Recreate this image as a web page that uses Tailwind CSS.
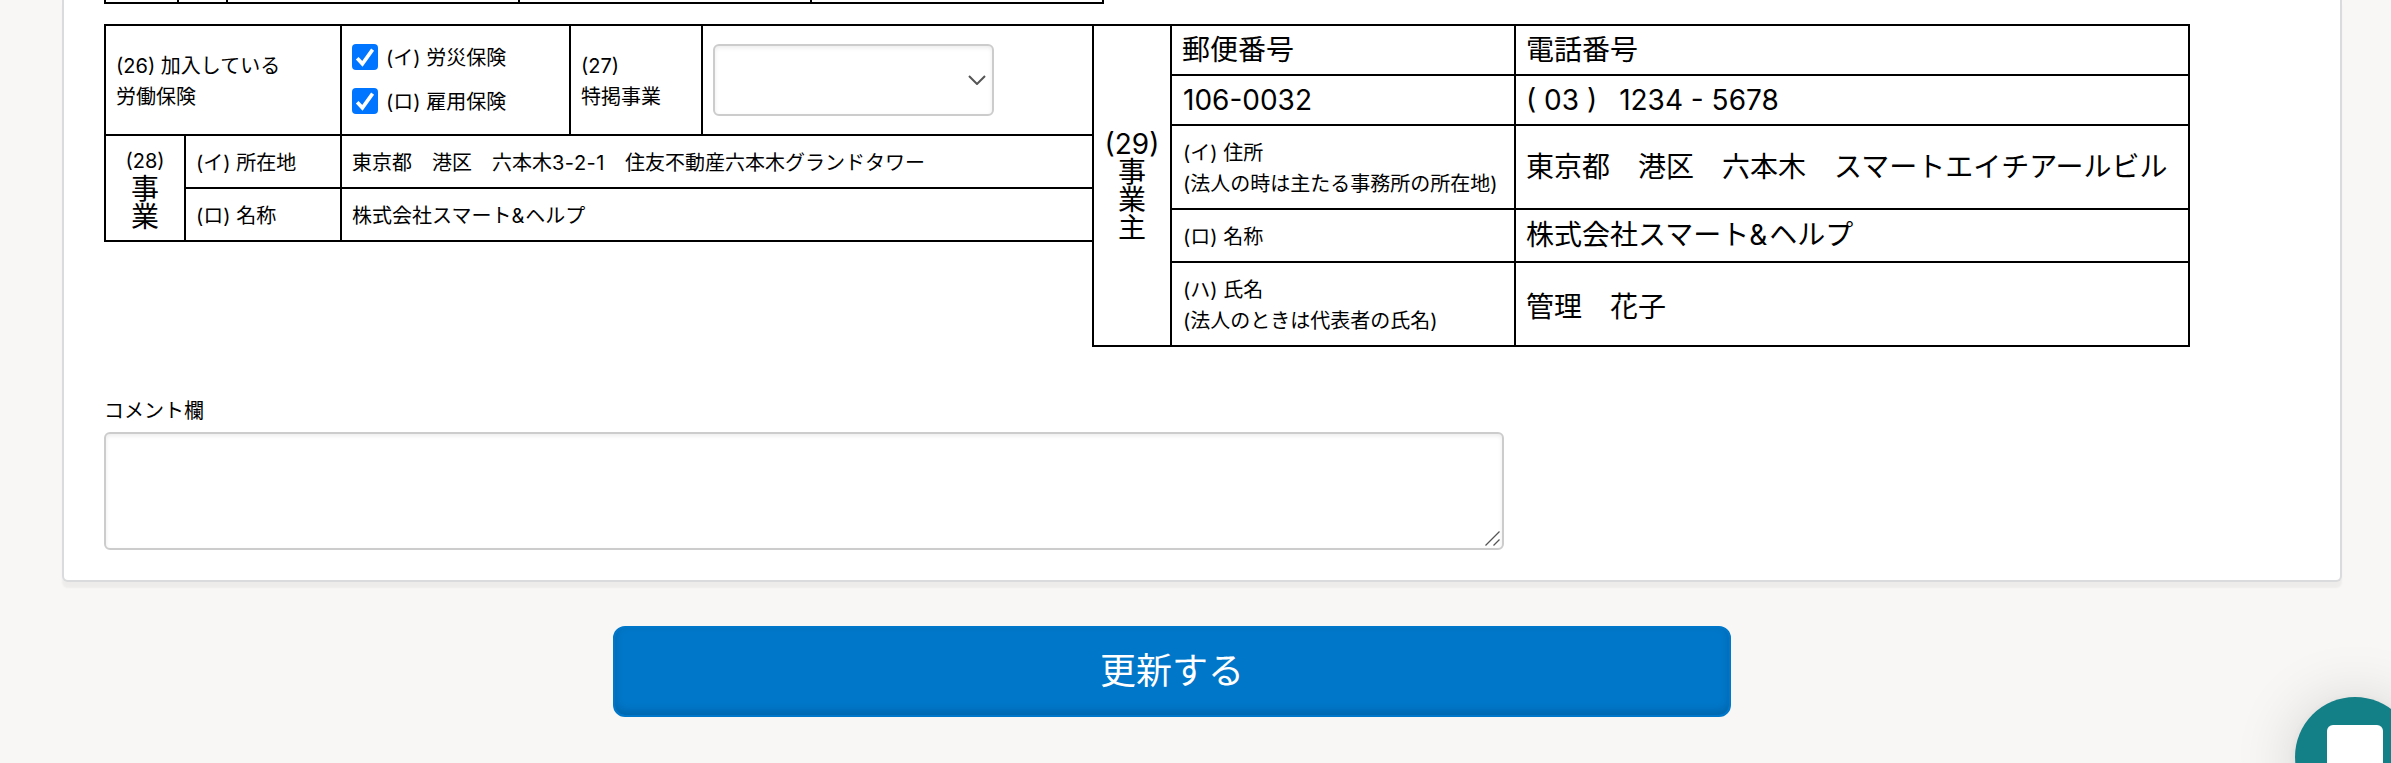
<!DOCTYPE html>
<html lang="ja">
<head>
<meta charset="utf-8">
<title>更新</title>
<script src="https://cdn.jsdelivr.net/npm/@tailwindcss/browser@4"></script>
</head>
<body class="h-screen overflow-hidden bg-[#f8f7f6] text-black text-[20px] leading-[31px] font-['Inter','Noto_Sans_CJK_JP',sans-serif]">
<main class="flex flex-col items-center pl-[62px] pr-[49px]">
  <section class="w-full h-[582px] bg-white border-2 border-t-0 border-[#dadbdc] rounded-b-[6px] shadow-[0_6px_2px_rgba(0,0,0,0.045)] pl-[40px]">
    <div class="flex w-[1000px] h-[4px] border-x-2 border-b-2 border-black divide-x-2 divide-black">
      <div class="w-[73px]"></div><div class="w-[49px]"></div><div class="w-[292px]"></div><div class="w-[292px]"></div><div class="flex-1"></div>
    </div>

    <div class="mt-[20px] flex items-start">
      <table class="table-fixed border-collapse w-[990px] shrink-0 [&_td]:border-2 [&_td]:border-black [&_td]:px-[10px] [&_td]:py-0">
        <colgroup><col class="w-[80px]"><col class="w-[156px]"><col class="w-[229px]"><col class="w-[132px]"><col class="w-[391px]"></colgroup>
        <tr class="h-[110px]">
          <td colspan="2"><div class="pt-[3px]">(26) 加入している<br>労働保険</div></td>
          <td>
            <div class="flex flex-col gap-[18px] pb-[2px]">
              <label class="flex items-center gap-2 h-[26px]"><svg class="size-[26px]" viewBox="0 0 26 26"><rect width="26" height="26" rx="4" fill="#0075ff"/><path d="M5.200 14.200l5.200 5.600L20.600 5.600" fill="none" stroke="#fff" stroke-width="3.600"/></svg><span class="pt-[2px]">(イ) 労災保険</span></label>
              <label class="flex items-center gap-2 h-[26px]"><svg class="size-[26px]" viewBox="0 0 26 26"><rect width="26" height="26" rx="4" fill="#0075ff"/><path d="M5.200 14.200l5.200 5.600L20.600 5.600" fill="none" stroke="#fff" stroke-width="3.600"/></svg><span class="pt-[2px]">(ロ) 雇用保険</span></label>
            </div>
          </td>
          <td><div class="pt-[3px]">(27)<br>特掲事業</div></td>
          <td>
            <div class="flex items-center justify-end w-[281px] h-[72px] border-2 border-[#ccc] rounded-[6px] pr-[6px] shadow-[inset_0_2px_4px_rgba(0,0,0,0.08)]">
              <svg class="w-[18px] h-[10px]" viewBox="0 0 18 10"><path d="M1 1l8 8 8-8" fill="none" stroke="#555" stroke-width="2"/></svg>
            </div>
          </td>
        </tr>
        <tr class="h-[53px]">
          <td rowspan="2"><div class="flex flex-col items-center pt-[2px] leading-[28px]"><span>(28)</span><span class="text-[28px]">事</span><span class="text-[28px]">業</span></div></td>
          <td class="whitespace-nowrap"><div class="pt-[3px]">(イ) 所在地</div></td>
          <td colspan="3"><div class="pt-[3px]">東京都　港区　六本木<span class="tracking-[0.5px]">3-2-1</span>　住友不動産六本木グランドタワー</div></td>
        </tr>
        <tr class="h-[53px]">
          <td><div class="pt-[3px]">(ロ) 名称</div></td>
          <td colspan="3"><div class="pt-[3px]">株式会社スマート<span class="tracking-[1px]">&amp;</span>ヘルプ</div></td>
        </tr>
      </table>

      <table class="table-fixed border-collapse w-[1098px] shrink-0 -ml-[2px] [&_td]:border-2 [&_td]:border-black [&_td]:px-[10px] [&_td]:py-0 [&_td]:whitespace-nowrap">
        <colgroup><col class="w-[78px]"><col class="w-[344px]"><col class="w-[674px]"></colgroup>
        <tr class="h-[50px] text-[28px]">
          <td rowspan="5"><div class="flex flex-col items-center leading-[28px]"><span>(29)</span><span>事</span><span>業</span><span>主</span></div></td>
          <td>郵便番号</td>
          <td>電話番号</td>
        </tr>
        <tr class="h-[50px] text-[28px]">
          <td><div class="pl-px">106-0032</div></td>
          <td><span>( 03 )</span><span class="ml-[22px]">1234 - 5678</span></td>
        </tr>
        <tr class="h-[84px]">
          <td><div class="pt-[3px] pl-px">(イ) 住所<br>(法人の時は主たる事務所の所在地)</div></td>
          <td class="text-[28px]">東京都　港区　六本木　スマートエイチアールビル</td>
        </tr>
        <tr class="h-[53px]">
          <td><div class="pt-[3px] pl-px">(ロ) 名称</div></td>
          <td class="text-[28px]">株式会社スマート<span class="tracking-[2px]">&amp;</span>ヘルプ</td>
        </tr>
        <tr class="h-[84px]">
          <td><div class="pt-[3px] pl-px">(ハ) 氏名<br>(法人のときは代表者の氏名)</div></td>
          <td class="text-[28px]"><div class="pt-[7px]">管理　花子</div></td>
        </tr>
      </table>
    </div>

    <div class="mt-[49px]">コメント欄</div>
    <div class="mt-[5px] flex items-end justify-end w-[1400px] h-[118px] border-2 border-[#ccc] rounded-[6px] p-[2px] shadow-[inset_0_2px_4px_rgba(0,0,0,0.08)]">
      <svg class="size-[15px]" viewBox="0 0 15 15"><path d="M.5 14.500l14-14M8.500 14.500l6-6" fill="none" stroke="#555" stroke-width="1.300"/></svg>
    </div>
  </section>

  <button class="mt-[44px] mr-[60px] w-[1118px] h-[91px] bg-[#0077c9] border-2 border-[#0077c9] rounded-[12px] text-white text-[36px] shadow-[inset_0_-4px_8px_rgba(0,0,0,0.15)]">更新する</button>
</main>

<div class="fixed left-[2295px] top-[697px] size-[120px] rounded-full bg-[#137f86] shadow-[0_2px_12px_rgba(0,0,0,0.06),0_4px_64px_rgba(0,0,0,0.16)] flex justify-center pt-[28px]">
  <div class="w-[56px] h-[64px] rounded-[6px] bg-white"></div>
</div>
</body>
</html>
